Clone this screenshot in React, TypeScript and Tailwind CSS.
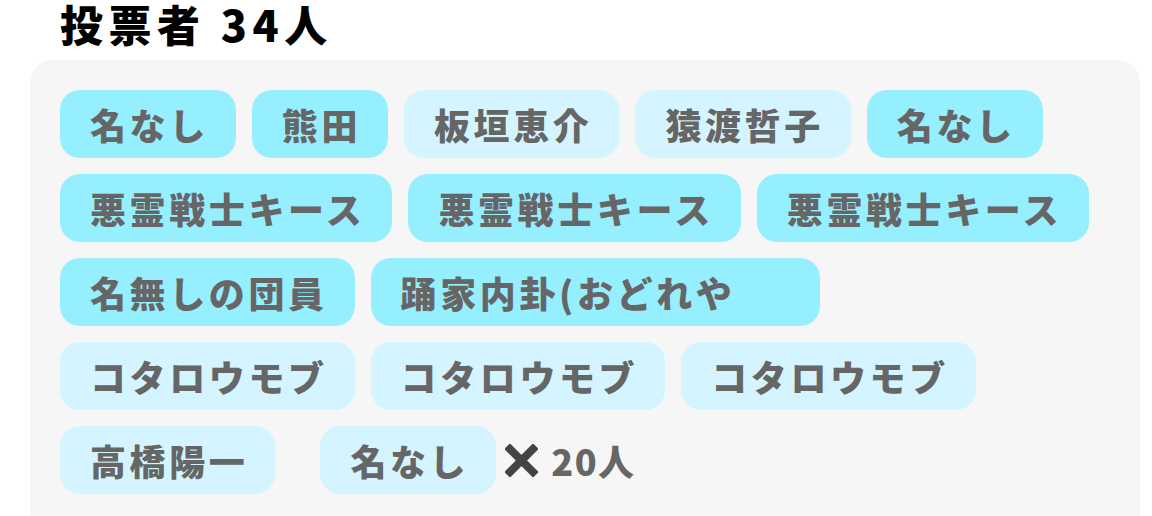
import React from "react";

type Voter = { name: string; hi: boolean; w?: string };

const rows: Voter[] = [
  { name: "名なし", hi: true },
  { name: "熊田", hi: true },
  { name: "板垣恵介", hi: false },
  { name: "猿渡哲子", hi: false },
  { name: "名なし", hi: true },
  { name: "悪霊戦士キース", hi: true },
  { name: "悪霊戦士キース", hi: true },
  { name: "悪霊戦士キース", hi: true },
  { name: "名無しの団員", hi: true },
  { name: "踊家内卦(おどれや", hi: true, w: "w-[449px]" },
  { name: "コタロウモブ", hi: false },
  { name: "コタロウモブ", hi: false },
  { name: "コタロウモブ", hi: false },
  { name: "高橋陽一", hi: false },
];

function Chip({ v }: { v: Voter }) {
  return (
    <div
      className={`flex h-[68px] items-center rounded-[20px] pl-[30px] pr-[27px] text-[36px] font-black tracking-[3.6px] text-[#666666] ${
        v.hi ? "bg-[#96efff]" : "bg-[#d4f5ff]"
      } ${v.w ?? ""}`}
    >
      <span className="leading-[44px] whitespace-nowrap">{v.name}</span>
    </div>
  );
}

export default function App() {
  return (
    <div
      className="h-[516px] w-[1152px] overflow-hidden bg-white pl-[30px]"
      style={{ fontFamily: '"Noto Sans CJK JP", "Noto Sans", sans-serif' }}
    >
      <div className="flex h-[60px] items-start pl-[30px]">
        <h1 className="text-[43px] font-black leading-[46px] tracking-[5.5px] text-black">
          投票者 34人
        </h1>
      </div>
      <div className="w-[1110px] rounded-[22px] bg-[#f6f6f6] p-[30px] pb-[40px]">
        <div className="flex flex-wrap gap-4">
          {rows.map((v, i) => (
            <Chip key={i} v={v} />
          ))}
          <div className="ml-[29px] flex items-center">
            <Chip v={{ name: "名なし", hi: false }} />
            <svg className="ml-[9px]" width="33" height="33" viewBox="0 0 33 33">
              <path
                d="M5 5 L28 28 M28 5 L5 28"
                stroke="#444444"
                strokeWidth="8"
                strokeLinecap="square"
              />
            </svg>
            <span className="ml-[13px] text-[36px] font-black leading-[44px] tracking-[1.5px] text-[#666666]">
              20人
            </span>
          </div>
        </div>
      </div>
    </div>
  );
}
